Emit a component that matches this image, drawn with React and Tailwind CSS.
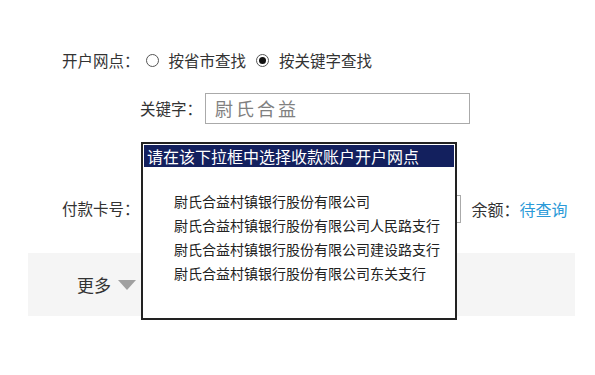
const FONT = { fontFamily: '"Noto Sans CJK SC", "Noto Sans", sans-serif' };

const branches = [
  "尉氏合益村镇银行股份有限公司",
  "尉氏合益村镇银行股份有限公司人民路支行",
  "尉氏合益村镇银行股份有限公司建设路支行",
  "尉氏合益村镇银行股份有限公司东关支行",
];

function Radio({ checked }) {
  return (
    <span className="flex h-[13px] w-[13px] items-center justify-center rounded-full border border-[#555] bg-white">
      {checked && <span className="h-[7px] w-[7px] rounded-full bg-[#111]" />}
    </span>
  );
}

export default function App() {
  return (
    <div className="relative h-[375px] w-[595px] overflow-hidden bg-white text-[#333]" style={FONT}>
      <div className="pt-[50px]">
        {/* 开户网点 */}
        <div className="flex h-[20px] items-center pl-[62px] text-[15.5px] leading-[20px]">
          <span>开户网点：</span>
          <span className="ml-[6px]"><Radio /></span>
          <span className="ml-[10px]">按省市查找</span>
          <span className="ml-[10px]"><Radio checked /></span>
          <span className="ml-[10px]">按关键字查找</span>
        </div>

        {/* 关键字 */}
        <div className="mt-[23px] flex items-center pl-[140px]">
          <span className="text-[15.5px]">关键字：</span>
          <div className="ml-[3px] flex h-[31px] w-[265px] items-center border border-[#aaa] pl-[9px] text-[18px] tracking-[3px] text-[#808080]">
            尉氏合益
          </div>
        </div>

        {/* 付款卡号 */}
        <div className="mt-[71px] flex items-center pl-[62px]">
          <span className="text-[15.5px]">付款卡号：</span>
          <div className="ml-[4px] h-[28px] w-[317px] border border-[#aaa] bg-white" />
          <span className="ml-[11px] text-[16px]">余额：</span>
          <span className="text-[16px] text-[#2b9ad8]">待查询</span>
        </div>

        {/* 更多 */}
        <div className="ml-[28px] mr-[20px] mt-[30px] flex h-[63px] items-center bg-[#f5f5f5] pl-[49px]">
          <span className="text-[17px] text-[#333]">更多</span>
          <svg className="ml-[7px]" width="18" height="10" viewBox="0 0 18 10">
            <polygon points="0,0 18,0 9,10" fill="#a0a0a0" />
          </svg>
        </div>
      </div>

      {/* 下拉框 */}
      <div className="absolute left-[141px] top-[142px] h-[178px] w-[316px] border-2 border-[#222] bg-white p-[1px]">
        <div className="flex h-[22px] items-center bg-[#13205e] pl-[3px] text-[16px] text-white">
          请在该下拉框中选择收款账户开户网点
        </div>
        <ul className="pl-[30px] pt-[22px] text-[14px] leading-[24px] text-[#222]">
          {branches.map((b) => (
            <li key={b}>{b}</li>
          ))}
        </ul>
      </div>
    </div>
  );
}
